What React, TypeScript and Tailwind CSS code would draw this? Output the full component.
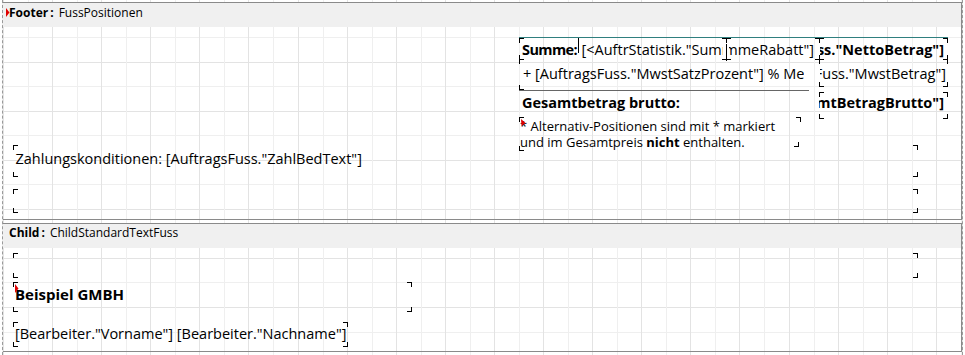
import React from "react";

type K = "tl" | "tr" | "bl" | "br";
const kcls: Record<K, string> = {
  tl: "border-l border-t",
  tr: "border-r border-t",
  bl: "border-l border-b",
  br: "border-r border-b",
};

const corners: [string, K][] = [
  // footer right block
  ["left-[519px] top-[38px]", "tl"],
  ["left-[722px] top-[38px]", "tr"],
  ["left-[726px] top-[38px]", "tl"],
  ["left-[815px] top-[38px]", "tr"],
  ["left-[819px] top-[38px]", "tl"],
  ["left-[943px] top-[38px]", "tr"],
  ["left-[519px] top-[55px]", "bl"],
  ["left-[519px] top-[59px]", "tl"],
  ["left-[726px] top-[55px]", "bl"],
  ["left-[722px] top-[55px]", "br"],
  ["left-[819px] top-[55px]", "bl"],
  ["left-[815px] top-[55px]", "br"],
  ["left-[819px] top-[59px]", "tl"],
  ["left-[815px] top-[59px]", "tr"],
  ["left-[943px] top-[55px]", "br"],
  ["left-[943px] top-[59px]", "tr"],
  ["left-[519px] top-[85px]", "bl"],
  ["left-[819px] top-[82px]", "bl"],
  ["left-[943px] top-[82px]", "br"],
  ["left-[819px] top-[92px]", "tl"],
  ["left-[943px] top-[92px]", "tr"],
  ["left-[819px] top-[114px]", "bl"],
  ["left-[943px] top-[114px]", "br"],
  ["left-[519px] top-[117px]", "tl"],
  ["left-[796px] top-[117px]", "tr"],
  ["left-[519px] top-[146px]", "bl"],
  ["left-[794px] top-[142px]", "br"],
  // footer left objects
  ["left-[13px] top-[145px]", "tl"],
  ["left-[13px] top-[172px]", "bl"],
  ["left-[913px] top-[145px]", "tr"],
  ["left-[913px] top-[172px]", "br"],
  ["left-[13px] top-[189px]", "tl"],
  ["left-[13px] top-[208px]", "bl"],
  ["left-[913px] top-[189px]", "tr"],
  ["left-[913px] top-[208px]", "br"],
  // child band
  ["left-[13px] top-[253px]", "tl"],
  ["left-[13px] top-[273px]", "bl"],
  ["left-[913px] top-[253px]", "tr"],
  ["left-[913px] top-[273px]", "br"],
  ["left-[13px] top-[282px]", "tl"],
  ["left-[13px] top-[307px]", "bl"],
  ["left-[407px] top-[282px]", "tr"],
  ["left-[407px] top-[307px]", "br"],
  ["left-[13px] top-[322px]", "tl"],
  ["left-[13px] top-[342px]", "bl"],
  ["left-[343px] top-[322px]", "tr"],
  ["left-[343px] top-[342px]", "br"],
];

function RedMark({ cls }: { cls: string }) {
  return (
    <svg className={`absolute ${cls}`} width="4" height="9" viewBox="0 0 4 9">
      <polygon points="0,0 3.5,4.5 0,9" fill="#e00000" />
    </svg>
  );
}

function BandHeader({ kind, name, pt }: { kind: string; name: string; pt: string }) {
  return (
    <div className={`relative h-[24px] bg-[#f0f0f0] pl-[6px] ${pt} text-[12px] leading-[16px] whitespace-nowrap`}>
      <b className="font-bold">{kind}</b>
      <b className="font-bold ml-[2px]">:</b>
      <span className="ml-[5px]">{name}</span>
    </div>
  );
}

export default function App() {
  return (
    <div className="relative w-[965px] h-[355px] bg-white overflow-hidden text-black font-['Open_Sans',sans-serif]">
      <div className="ml-[2px] w-[961px] h-[355px] border-x border-dashed border-[#9a9a9a] pt-[2px] bg-[image:repeating-linear-gradient(90deg,#e3e3e3_0_1px,transparent_1px_25px,#efefef_25px_26px,transparent_26px_49.1px),repeating-linear-gradient(180deg,transparent_0_12.5px,#e3e3e3_12.5px_13.5px,transparent_13.5px_37px,#efefef_37px_38px,transparent_38px_49.1px)]">
        {/* Footer band */}
        <div className="border-y border-r border-[#8a8a8a]">
          <BandHeader kind="Footer" name="FussPositionen" pt="pt-[2px]" />
          <div className="h-[192px]" />
        </div>
        {/* Child band */}
        <div className="mt-[3px] border-y border-r border-[#8a8a8a]">
          <BandHeader kind="Child" name="ChildStandardTextFuss" pt="pt-[1px]" />
          <div className="h-[103px]" />
        </div>
      </div>

      {/* Designer canvas objects */}
      <div className="absolute inset-0 pointer-events-none text-[14.5px] leading-[20px] whitespace-nowrap">
        <RedMark cls="left-[6px] top-[8px]" />

        {/* table lines */}
        <div className="absolute left-[519px] top-[37px] w-[429px] h-px bg-[#2f7f7f]" />
        <div className="absolute left-[519px] top-[90px] w-[290px] h-px bg-[#666666]" />
        <div className="absolute left-[578px] top-[38px] w-px h-[15px] bg-black" />
        <div className="absolute left-[726px] top-[44px] w-px h-[17px] bg-black" />

        {/* row 1 */}
        <div className="absolute left-[519px] top-[40px] w-[59px] overflow-hidden pl-[3px] font-bold tracking-[-0.6px]">Summe:</div>
        <div className="absolute left-[579px] top-[40px] w-[144px] overflow-hidden pl-[2.5px]">
          {'[<AuftrStatistik."SummeNetto"]'}
        </div>
        <div className="absolute left-[729px] top-[40px] w-[85px] overflow-hidden flex justify-end">
          <span className="shrink-0">{'[<AuftrStatistik."SummeRabatt"]'}</span>
        </div>
        <div className="absolute left-[820px] top-[40px] w-[124px] overflow-hidden flex justify-end font-bold">
          <span className="shrink-0">[AuftragsFuss."NettoBetrag"]</span>
        </div>

        {/* row 2 */}
        <div className="absolute left-[519px] top-[64px] w-[285px] overflow-hidden pl-[4px]">
          + [AuftragsFuss."MwstSatzProzent"] % Mehrwertsteuer:
        </div>
        <div className="absolute left-[820px] top-[64px] w-[126px] overflow-hidden flex justify-end">
          <span className="shrink-0">[AuftragsFuss."MwstBetrag"]</span>
        </div>

        {/* row 3 */}
        <div className="absolute left-[522px] top-[93px] font-bold">Gesamtbetrag brutto:</div>
        <div className="absolute left-[819px] top-[93px] w-[125px] overflow-hidden flex justify-end font-bold">
          <span className="shrink-0">[AuftragsFuss."GesamtBetragBrutto"]</span>
        </div>

        {/* footnote */}
        <div className="absolute left-[520px] top-[118px] text-[13px] leading-[16px]">
          <div>* Alternativ-Positionen sind mit * markiert</div>
          <div>
            und im Gesamtpreis <b className="font-bold">nicht</b> enthalten.
          </div>
        </div>
        <svg className="absolute left-[521px] top-[119px]" width="5" height="7" viewBox="0 0 5 7">
          <polygon points="0,0 4.5,4 0.5,7" fill="#e00000" />
        </svg>

        {/* left footer text */}
        <div className="absolute left-[15.5px] top-[149px]">Zahlungskonditionen: [AuftragsFuss."ZahlBedText"]</div>

        {/* child band objects */}
        <div className="absolute left-[15px] top-[284px] font-bold text-[15px]">Beispiel GMBH</div>
        <RedMark cls="left-[15px] top-[284px]" />
        <div className="absolute left-[15px] top-[324px]">[Bearbeiter."Vorname"] [Bearbeiter."Nachname"]</div>

        {corners.map(([pos, k], i) => (
          <div key={i} className={`absolute w-[5px] h-[5px] border-black ${pos} ${kcls[k]}`} />
        ))}
      </div>
    </div>
  );
}
